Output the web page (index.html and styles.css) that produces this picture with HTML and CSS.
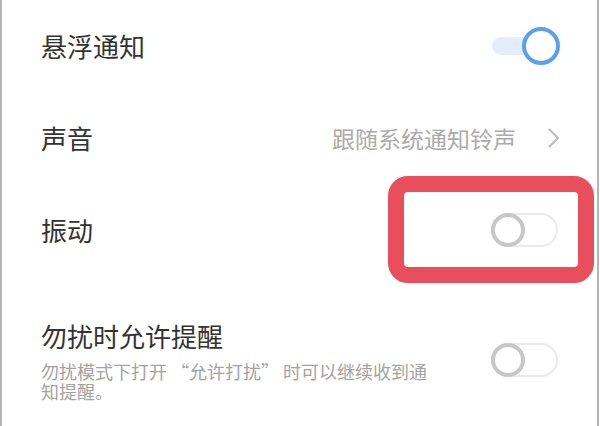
FILE: index.html
```html
<!DOCTYPE html>
<html lang="zh-CN">
<head>
<meta charset="utf-8">
<link rel="stylesheet" href="styles.css">
</head>
<body>
<div class="page">
  <div class="row">
    <div class="title">悬浮通知</div>
    <div class="switch switch-on"><span class="track"></span><span class="knob"></span></div>
  </div>
  <div class="row">
    <div class="title">声音</div>
    <div class="value">
      <span>跟随系统通知铃声</span>
      <svg class="chev" width="12" height="20" viewBox="0 0 12 20"><polyline points="1.5,1.5 10,10 1.5,18.5" fill="none" stroke="#bdbdbd" stroke-width="2.2" stroke-linecap="round" stroke-linejoin="round"/></svg>
    </div>
  </div>
  <div class="row">
    <div class="title">振动</div>
    <div class="switch switch-off"><span class="knob"></span></div>
  </div>
  <div class="row row-tall">
    <div class="text">
      <div class="title">勿扰时允许提醒</div>
      <div class="desc">勿扰模式下打开<span class="q q-open">“</span>允许打扰<span class="q q-close">”</span>时可以继续收到通知提醒。</div>
    </div>
    <div class="switch switch-off"><span class="knob"></span></div>
  </div>
  <div class="highlight"></div>
</div>
</body>
</html>
```
FILE: styles.css
```css
html, body {
  margin: 0;
  padding: 0;
  background: #fff;
}
.page {
  position: relative;
  width: 599px;
  height: 426px;
  box-sizing: border-box;
  border-left: 2px solid #b4b4b4;
  border-right: 2px solid #b4b4b4;
  padding: 0 39px 0 39px;
  font-family: "Noto Sans CJK SC", "Noto Sans", sans-serif;
  overflow: hidden;
}
.row {
  height: 92px;
  display: flex;
  align-items: center;
  justify-content: space-between;
}
.row-tall {
  height: auto;
  padding-top: 43px;
}
.title {
  font-size: 26px;
  line-height: 34px;
  color: #333;
}
.value {
  display: flex;
  align-items: center;
  gap: 32px;
  font-size: 23px;
  line-height: 30px;
  color: #ababab;
  margin-right: -2px;
}
.chev {
  display: block;
}
.desc {
  margin-top: 8px;
  max-width: 392px;
  font-size: 18px;
  line-height: 20px;
  color: #a3a3a3;
}
.q-open {
  margin-left: 4px;
}
.q-close {
  margin-right: 4px;
}
.switch {
  position: relative;
  flex: none;
}
.switch-on {
  display: flex;
  align-items: center;
  width: 68px;
  height: 38px;
  margin-right: -2px;
}
.switch-on .track {
  width: 48px;
  height: 18px;
  border-radius: 9px;
  background: #e3eefc;
}
.switch-on .knob {
  width: 38px;
  height: 38px;
  margin-left: -18px;
  box-sizing: border-box;
  border: 4px solid #5b9ff0;
  border-radius: 50%;
  background: #fff;
}
.switch-off {
  width: 67px;
  height: 34px;
  box-sizing: border-box;
  border: 2px solid #ebebeb;
  border-radius: 17px;
}
.switch-off .knob {
  position: absolute;
  left: -2px;
  top: -2px;
  width: 34px;
  height: 34px;
  box-sizing: border-box;
  border: 4px solid #c7c7c7;
  border-radius: 50%;
  background: #fff;
}
.highlight {
  position: absolute;
  left: 386px;
  top: 176px;
  width: 206px;
  height: 107px;
  box-sizing: border-box;
  border: 16px solid #e84e5b;
  border-radius: 20px;
}
```
